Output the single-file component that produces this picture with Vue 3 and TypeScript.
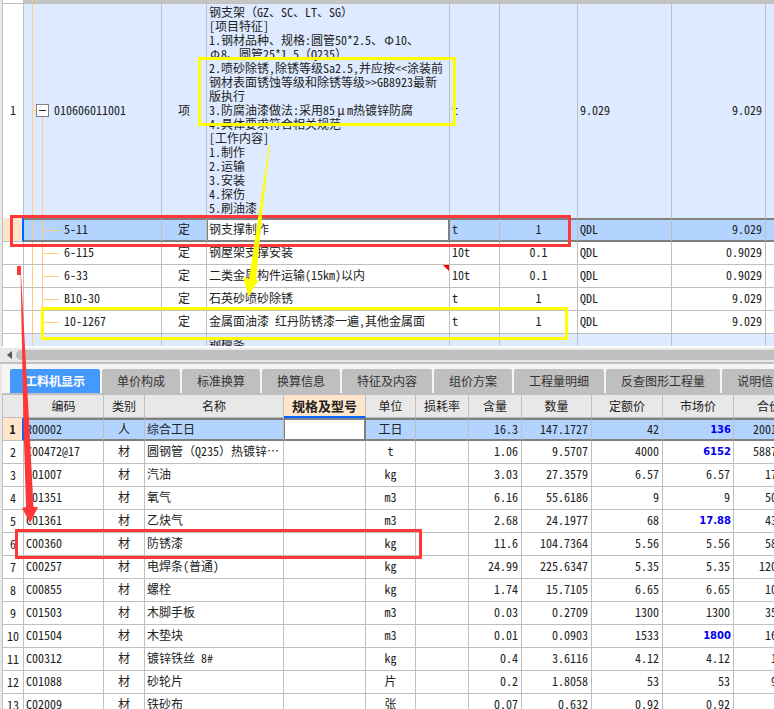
<script setup lang="ts">
import { ref } from 'vue'

interface BillRow {
  code: string
  kind: string
  name: string
  unit: string
  factor: string
  rule: string
  qty: string
  flagged?: boolean
}

interface MaterialRow {
  code: string
  kind: string
  name: string
  unit: string
  content: string
  qty: string
  quota: string
  market: string
  total: string
  adjusted?: boolean
}

const featureText = [
  '钢支架（GZ、SC、LT、SG）',
  '[项目特征]',
  '1.钢材品种、规格:圆管50*2.5、Φ10、',
  'Φ8、圆管25*1.5（Q235）',
  '2.喷砂除锈,除锈等级Sa2.5,并应按<<涂装前',
  '钢材表面锈蚀等级和除锈等级>>GB8923最新',
  '版执行',
  '3.防腐油漆做法:采用85μm热镀锌防腐',
  '4.具体要求符合相关规范',
  '[工作内容]',
  '1.制作',
  '2.运输',
  '3.安装',
  '4.探伤',
  '5.刷油漆',
].join('\n')

const billRows: BillRow[] = [
  { code: '5-11', kind: '定', name: '钢支撑制作', unit: 't', factor: '1', rule: 'QDL', qty: '9.029' },
  { code: '6-115', kind: '定', name: '钢屋架支撑安装', unit: '10t', factor: '0.1', rule: 'QDL', qty: '0.9029' },
  { code: '6-33', kind: '定', name: '二类金属构件运输(15km)以内', unit: '10t', factor: '0.1', rule: 'QDL', qty: '0.9029', flagged: true },
  { code: 'B10-30', kind: '定', name: '石英砂喷砂除锈', unit: 't', factor: '1', rule: 'QDL', qty: '9.029' },
  { code: '10-1267', kind: '定', name: '金属面油漆 红丹防锈漆一遍,其他金属面', unit: 't', factor: '1', rule: 'QDL', qty: '9.029' },
]

const tabs = ['工料机显示', '单价构成', '标准换算', '换算信息', '特征及内容', '组价方案', '工程量明细', '反查图形工程量', '说明信息']
const headers = ['编码', '类别', '名称', '规格及型号', '单位', '损耗率', '含量', '数量', '定额价', '市场价', '合价']

const materials: MaterialRow[] = [
  { code: 'R00002', kind: '人', name: '综合工日', unit: '工日', content: '16.3', qty: '147.1727', quota: '42', market: '136', total: '20015.49', adjusted: true },
  { code: 'C00472@17', kind: '材', name: '圆钢管（Q235）热镀锌⋯', unit: 't', content: '1.06', qty: '9.5707', quota: '4000', market: '6152', total: '58878.95', adjusted: true },
  { code: 'C01007', kind: '材', name: '汽油', unit: 'kg', content: '3.03', qty: '27.3579', quota: '6.57', market: '6.57', total: '179.74' },
  { code: 'C01351', kind: '材', name: '氧气', unit: 'm3', content: '6.16', qty: '55.6186', quota: '9', market: '9', total: '500.57' },
  { code: 'C01361', kind: '材', name: '乙炔气', unit: 'm3', content: '2.68', qty: '24.1977', quota: '68', market: '17.88', total: '432.65', adjusted: true },
  { code: 'C00360', kind: '材', name: '防锈漆', unit: 'kg', content: '11.6', qty: '104.7364', quota: '5.56', market: '5.56', total: '582.33' },
  { code: 'C00257', kind: '材', name: '电焊条(普通)', unit: 'kg', content: '24.99', qty: '225.6347', quota: '5.35', market: '5.35', total: '1207.15' },
  { code: 'C00855', kind: '材', name: '螺栓', unit: 'kg', content: '1.74', qty: '15.7105', quota: '6.65', market: '6.65', total: '104.47' },
  { code: 'C01503', kind: '材', name: '木脚手板', unit: 'm3', content: '0.03', qty: '0.2709', quota: '1300', market: '1300', total: '352.17' },
  { code: 'C01504', kind: '材', name: '木垫块', unit: 'm3', content: '0.01', qty: '0.0903', quota: '1533', market: '1800', total: '162.54', adjusted: true },
  { code: 'C00312', kind: '材', name: '镀锌铁丝 8#', unit: 'kg', content: '0.4', qty: '3.6116', quota: '4.12', market: '4.12', total: '14.88' },
  { code: 'C01088', kind: '材', name: '砂轮片', unit: '片', content: '0.2', qty: '1.8058', quota: '53', market: '53', total: '95.71' },
  { code: 'C02009', kind: '材', name: '铁砂布', unit: '张', content: '0.07', qty: '0.632', quota: '0.92', market: '0.92', total: '0.58' },
]

// Full-width punctuation and Greek letters sit in a square cell of their own
const isWide = (part: string) => /^[（）、Φμ]$/.test(part)
const pieces = (text: string) => text.split(/([（）、Φμ])/).filter(Boolean)

const activeTab = ref(0)
const expanded = ref(true)
</script>

<template>
  <main class="app" lang="zh-CN">
    <section class="bill">
      <table class="grid">
        <colgroup>
          <col class="w-num"><col class="w-code"><col class="w-kind"><col class="w-name"><col class="w-unit">
          <col class="w-factor"><col class="w-rule"><col class="w-rule"><col class="w-end">
        </colgroup>
        <tbody>
          <tr class="above">
            <td class="num"></td><td class="code"></td><td></td><td></td><td></td><td></td><td></td><td></td><td></td>
          </tr>
          <tr class="parent">
            <td class="num">1</td>
            <td class="code">
              <div class="node">
                <button class="toggle" type="button" :aria-expanded="expanded" aria-label="010606011001" @click="expanded = !expanded">
                  <svg viewBox="0 0 11 11" width="11" height="11">
                    <path d="M2 5.5h7" stroke="#222" />
                    <path v-if="!expanded" d="M5.5 2v7" stroke="#222" />
                  </svg>
                </button>
                <span>010606011001</span>
              </div>
            </td>
            <td class="mid">项</td>
            <td class="feature"><span v-for="(part, i) in pieces(featureText)" :key="i" :class="{ wide: isWide(part) }">{{ part }}</span></td>
            <td>t</td>
            <td></td>
            <td>9.029</td>
            <td class="end">9.029</td>
            <td></td>
          </tr>
          <template v-if="expanded">
            <tr v-for="(row, i) in billRows" :key="row.code" :class="{ selected: i === 0 }">
              <td class="num"></td>
              <td class="code child">{{ row.code }}</td>
              <td class="mid">{{ row.kind }}</td>
              <td class="name" :class="{ editing: i === 0 }">{{ row.name }}<i v-if="row.flagged" class="flag"></i></td>
              <td>{{ row.unit }}</td>
              <td class="mid">{{ row.factor }}</td>
              <td>{{ row.rule }}</td>
              <td class="end">{{ row.qty }}</td>
              <td></td>
            </tr>
          </template>
          <tr class="cut">
            <td class="num"></td><td class="code"></td><td></td>
            <td><div class="peek">钢檩条</div></td>
            <td></td><td></td><td></td><td></td><td></td>
          </tr>
        </tbody>
      </table>
    </section>

    <div class="scrollbar">
      <button class="arrow" type="button" aria-label="◀">
        <svg viewBox="0 0 5 8" width="5" height="8"><path d="M5 0v8L0 4z" fill="#555" /></svg>
      </button>
      <div class="thumb"></div>
    </div>

    <nav class="tabs" role="tablist">
      <button
        v-for="(tab, i) in tabs" :key="tab" type="button" role="tab" class="tab"
        :class="{ active: i === activeTab }" :aria-selected="i === activeTab" @click="activeTab = i"
      >{{ tab }}</button>
    </nav>

    <section class="materials">
      <table class="grid">
        <colgroup>
          <col class="w-num"><col class="m-code"><col class="m-kind"><col class="m-name"><col class="m-spec"><col class="m-unit">
          <col class="m-loss"><col class="m-loss"><col class="m-qty"><col class="m-price"><col class="m-price"><col class="m-price">
        </colgroup>
        <thead>
          <tr>
            <th class="num"></th>
            <th v-for="head in headers" :key="head" scope="col" :class="{ current: head === '规格及型号' }">{{ head }}</th>
          </tr>
        </thead>
        <tbody>
          <tr v-for="(row, i) in materials" :key="row.code" :class="{ selected: i === 0 }">
            <td class="num">{{ i + 1 }}</td>
            <td>{{ row.code }}</td>
            <td class="mid">{{ row.kind }}</td>
            <td><span v-for="(part, j) in pieces(row.name)" :key="j" :class="{ wide: isWide(part) }">{{ part }}</span></td>
            <td :class="{ editing: i === 0 }"></td>
            <td class="mid">{{ row.unit }}</td>
            <td></td>
            <td class="end">{{ row.content }}</td>
            <td class="end">{{ row.qty }}</td>
            <td class="end">{{ row.quota }}</td>
            <td class="end" :class="{ adjusted: row.adjusted }">{{ row.market }}</td>
            <td class="end">{{ row.total }}</td>
          </tr>
        </tbody>
      </table>
    </section>

    <!-- Review marks drawn over both grids -->
    <svg class="marks" viewBox="0 0 774 709" width="774" height="709" aria-hidden="true">
      <g fill="none" stroke-width="3">
        <rect x="199.500" y="58.500" width="255" height="66" stroke="#ffff00" />
        <rect x="42.500" y="308.500" width="524" height="30" stroke="#ffff00" />
        <rect x="11.500" y="216.500" width="558" height="29" stroke="#ff3737" />
        <rect x="16.500" y="530.500" width="404" height="27" stroke="#ff3737" />
      </g>
      <path d="M269 145L249 279L243 277L248.500 297L258.500 280L256 280L263 205L270 145z" fill="#ffff00" />
      <path d="M17 266h4v9h-4z" fill="#ff3737" />
      <path d="M20.300 262L23.500 425L26 507L22 508L30 523L38 507L33.500 507L29 420z" fill="#ff3737" />
    </svg>
  </main>
</template>

<style>
body {
  background: #fff;
}
</style>

<style scoped>
.app {
  position: relative;
  display: flex;
  flex-direction: column;
  height: 100vh;
  overflow: hidden;
  background: #e8e8e8;
  color: #222;
  font-family: "Noto Sans CJK SC", sans-serif;
  font-feature-settings: "hwid";
  font-size: 12px;
  line-height: 14px;
}

button {
  margin: 0;
  border: 0;
  padding: 0;
  font: inherit;
  color: inherit;
}

.bill,
.materials {
  flex: none;
  margin-left: 2px;
  overflow: hidden;
}

.bill {
  border-bottom: 2px solid #fff;
}

.grid {
  width: 100%;
  table-layout: fixed;
  border-spacing: 0;
  border-left: 1px solid #bfbfbf;
}

.w-num { width: 21px; }
.w-code { width: 138px; }
.w-kind { width: 45px; }
.w-name { width: 243px; }
.w-unit { width: 50px; }
.w-factor { width: 78px; }
.w-rule { width: 94px; }
.w-end { width: 40px; }
.m-code { width: 80px; }
.m-kind { width: 41px; }
.m-name { width: 139px; }
.m-spec { width: 82px; }
.m-unit { width: 50px; }
.m-loss { width: 53px; }
.m-qty { width: 70px; }
.m-price { width: 71px; }

td,
th {
  box-sizing: border-box;
  height: 23px;
  padding: 0 3px 2px 2px;
  border-right: 1px solid #bfbfbf;
  border-bottom: 1px solid #bfbfbf;
  background-color: #fff;
  text-align: left;
  white-space: pre;
  overflow: hidden;
}

th {
  padding: 0;
  background-color: #e8e8e8;
  font-weight: 400;
  text-align: center;
}

th.current {
  border-bottom: 2px solid #0066ff;
  background-color: #ffe6ca;
  font-size: 13px;
  font-weight: 700;
}

.num,
.mid {
  padding: 0 0 2px;
  text-align: center;
}

.materials .num {
  padding: 0;
}

.end {
  text-align: right;
}

.wide {
  display: inline-block;
  width: 12px;
  height: 14px;
  font-feature-settings: normal;
  text-align: center;
  vertical-align: top;
}

.adjusted {
  padding: 0 2px 0 0;
  color: #0000f0;
  font-family: "DejaVu Sans", sans-serif;
  font-size: 10px;
  font-weight: 700;
}

.above td {
  height: 4px;
  padding: 0;
  background-color: #c5c5c5;
}

.above .num {
  background-color: #fff;
}

.parent td {
  height: 214px;
  border-bottom: 0;
  background-color: #ddeaff;
}

.parent .num {
  background-color: #fff;
}

.code {
  background-image: linear-gradient(#ffcc80, #ffcc80);
  background-repeat: no-repeat;
  background-position: 8px 0;
  background-size: 1px 100%;
}

.parent .code {
  background-image: linear-gradient(#ffcc80, #ffcc80), linear-gradient(#ffcc80, #ffcc80), linear-gradient(#ffcc80, #ffcc80);
  background-position: 8px 0, 18px 113px, 9px 106px;
  background-size: 1px 100%, 1px 101px, 3px 1px;
}

.child {
  padding-left: 40px;
  background-image: linear-gradient(#ffcc80, #ffcc80), linear-gradient(#ffcc80, #ffcc80), linear-gradient(#ffcc80, #ffcc80);
  background-position: 8px 0, 18px 0, 19px 50%;
  background-size: 1px 100%, 1px 100%, 16px 1px;
}

.node {
  display: flex;
  align-items: center;
  gap: 5px;
  padding-left: 10px;
}

.toggle {
  display: flex;
  border: 1px solid #808080;
  background: #fff;
}

.name {
  position: relative;
}

.flag {
  position: absolute;
  top: 0;
  right: 0;
  border-top: 6px solid #ff0000;
  border-left: 6px solid transparent;
}

.selected td {
  border-top: 2px solid #808080;
  border-bottom: 2px solid #808080;
  background-color: #b3d4ff;
}

.bill .selected td {
  height: 24px;
}

.selected .num {
  border-top: 0;
  border-right: 2px solid #0066ff;
  border-bottom: 1px solid #bfbfbf;
  background-color: #ffe6ca;
  font-weight: 700;
}

.selected .editing {
  border-right: 2px solid #808080;
  background-color: #fff;
  box-shadow: inset 1px 0 #808080;
}

.cut td {
  height: 12px;
  padding-bottom: 0;
  border-bottom: 0;
  background-color: #ddeaff;
}

.cut .num {
  background-color: #fff;
}

.peek {
  height: 12px;
  line-height: 20px;
  overflow: hidden;
}

.scrollbar {
  display: flex;
  flex: none;
  align-items: center;
  height: 14px;
  padding-left: 6px;
  border-bottom: 2px solid #bfbfbf;
}

.arrow {
  display: flex;
  width: 10px;
  padding-left: 1px;
  background: none;
}

.thumb {
  flex: 1;
  height: 10px;
  border-radius: 5px 0 0 5px;
  background: #bfbfbf;
}

.tabs {
  display: flex;
  flex: none;
  gap: 2px;
  margin-left: 2px;
  padding: 5px 0 0 8px;
  border-bottom: 2px solid #bfbfbf;
  background: #f5f5f5;
  overflow: hidden;
}

.tab {
  flex: none;
  height: 24px;
  padding: 0 15px;
  border-radius: 2px 2px 0 0;
  background: #bfbfbf;
  color: #333;
  white-space: nowrap;
}

.tab.active {
  background: #4499ff;
  color: #fff;
  font-weight: 700;
}

.marks {
  position: absolute;
  top: 0;
  left: 0;
  pointer-events: none;
}
</style>
